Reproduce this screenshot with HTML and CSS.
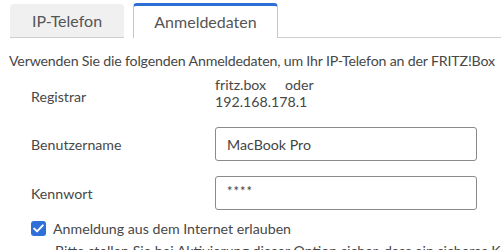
FILE: index.html
```html
<!DOCTYPE html>
<html lang="de">
<head>
<meta charset="utf-8">
<link rel="stylesheet" href="styles.css">
</head>
<body>
<div class="tabs">
  <div class="tab">IP-Telefon</div>
  <div class="tab active">Anmeldedaten</div>
  <div class="tab-rest"></div>
</div>
<p class="intro">Verwenden Sie die folgenden Anmeldedaten, um Ihr IP-Telefon an der FRITZ!Box</p>
<div class="form">
  <div class="row registrar">
    <div class="label">Registrar</div>
    <div class="value"><span class="host">fritz.box</span><span class="or">oder</span><br>192.168.178.1</div>
  </div>
  <div class="row">
    <div class="label">Benutzername</div>
    <div class="input">MacBook Pro</div>
  </div>
  <div class="row">
    <div class="label">Kennwort</div>
    <div class="input pw">****</div>
  </div>
</div>
<div class="check">
  <span class="box"><svg width="11" height="9" viewBox="0 0 11 9"><path d="M1.2 4.6 L4.1 7.4 L9.8 1.4" fill="none" stroke="#fff" stroke-width="2" stroke-linecap="round" stroke-linejoin="round"/></svg></span>
  <span>Anmeldung aus dem Internet erlauben</span>
</div>
<p class="hint">Bitte stellen Sie bei Aktivierung dieser Option sicher, dass ein sicheres K</p>
</body>
</html>
```
FILE: styles.css
```css
html, body {
  margin: 0;
  padding: 0;
  background: #fff;
  overflow: hidden;
}
body {
  font-family: Lato, "Liberation Sans", sans-serif;
  font-size: 14.2px;
  color: #474747;
  width: 501px;
  height: 250px;
}
.tabs {
  display: flex;
  align-items: flex-end;
  padding-top: 3px;
  height: 35px;
}
.tab {
  box-sizing: border-box;
  height: 34px;
  width: 114px;
  margin-left: 10px;
  background: #f0f0f0;
  border-radius: 4px 4px 0 0;
  border-bottom: 1px solid #cfcfcf;
  display: flex;
  align-items: center;
  justify-content: center;
  font-size: 16px;
  color: #555;
}
.tab.active {
  width: 145px;
  margin-left: 9px;
  height: 35px;
  background: #fff;
  border: 1px solid #c8c8c8;
  border-top: 3px solid #2e6fd6;
  border-bottom: none;
  padding-bottom: 2px;
}
.tab-rest {
  flex: 1;
  height: 34px;
  border-bottom: 1px solid #cfcfcf;
}
.intro {
  margin: 13px 0 0 9px;
  white-space: nowrap;
  line-height: 20px;
  letter-spacing: -0.18px;
}
.form {
  padding-left: 31px;
}
.row {
  display: grid;
  grid-template-columns: 184px 262px;
  align-items: center;
}
.registrar {
  margin-top: 5px;
  line-height: 17px;
  align-items: start;
}
.registrar .label {
  margin-top: 12px;
}
.host {
  display: inline-block;
  width: 70px;
}
.row + .row {
  margin-top: 15px;
}
.registrar + .row {
  margin-top: 17px;
}
.input {
  box-sizing: border-box;
  height: 34px;
  border: 1px solid #8a8a8a;
  border-radius: 3px;
  padding: 0 11px;
  display: flex;
  align-items: center;
  color: #444;
}
.pw {
  font-size: 13px;
  letter-spacing: 1px;
  padding-bottom: 4px;
}
.check {
  display: flex;
  align-items: center;
  margin: 10px 0 0 31px;
  gap: 7px;
  line-height: 17px;
}
.box {
  width: 15px;
  height: 15px;
  border-radius: 3px;
  background: #2f6fd8;
  display: flex;
  align-items: center;
  justify-content: center;
}
.hint {
  margin: 4px 0 0 55px;
  white-space: nowrap;
  line-height: 20px;
}
```
